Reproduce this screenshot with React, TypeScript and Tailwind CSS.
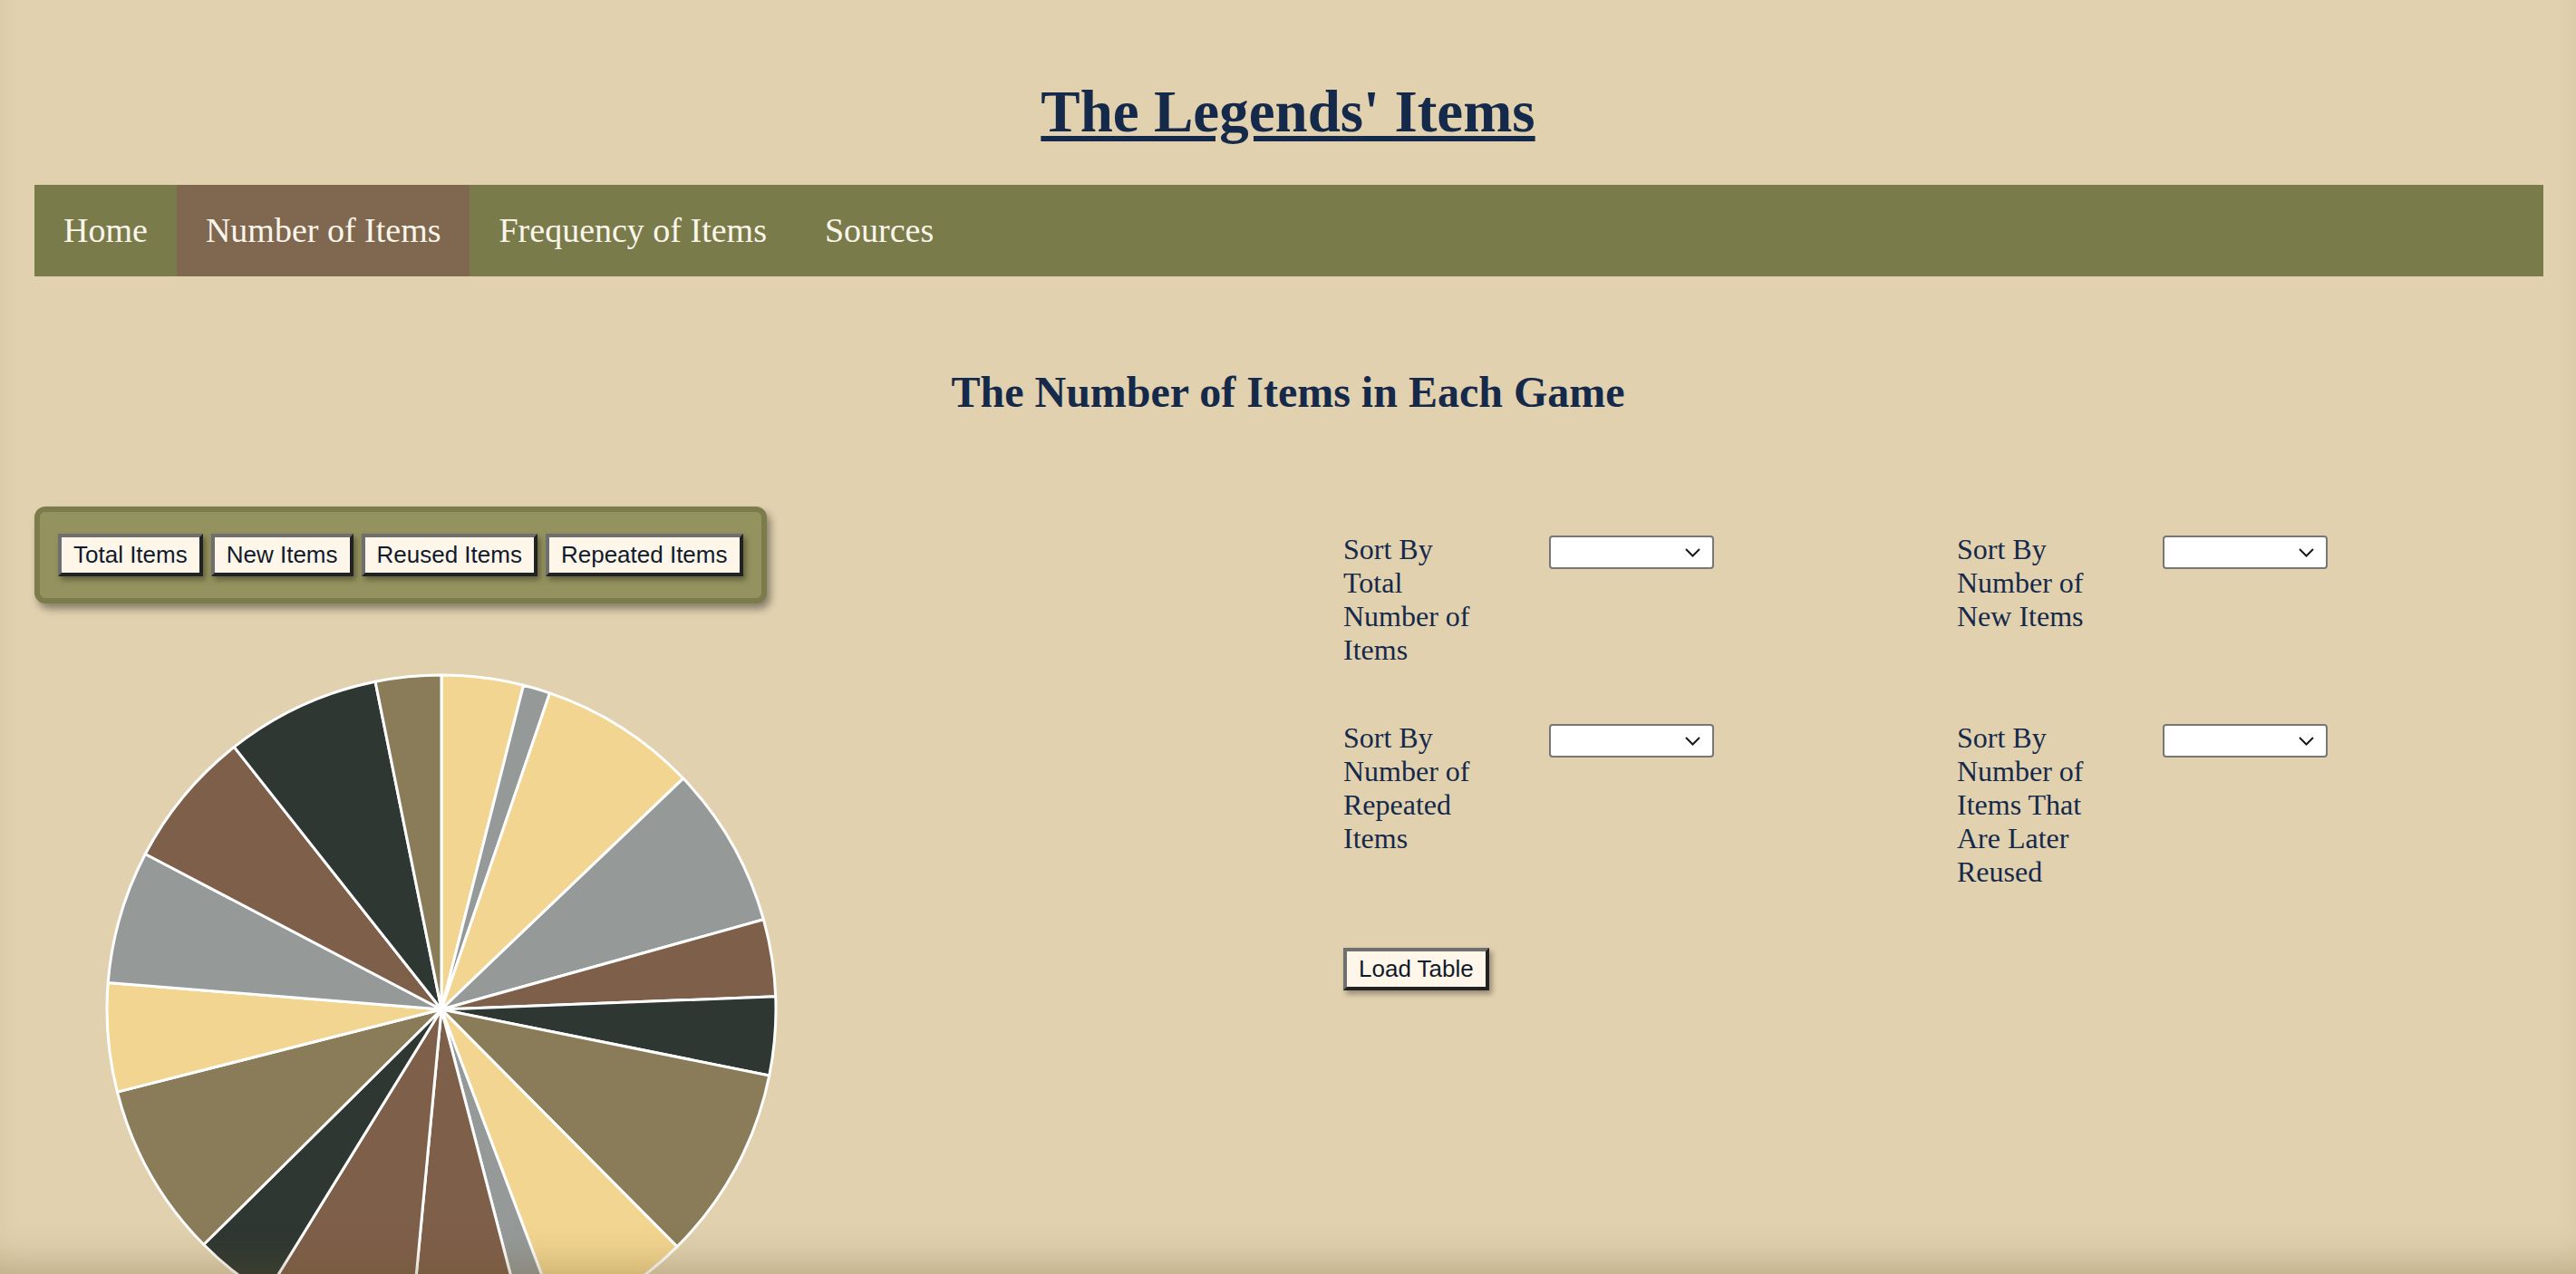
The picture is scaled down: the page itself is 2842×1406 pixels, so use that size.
import React from 'react';

const slices: [number, number, string][] = [
  [0, 14.2, '#F2D590'],
  [14.2, 18.9, '#959998'],
  [18.9, 46.3, '#F2D590'],
  [46.3, 74.4, '#959998'],
  [74.4, 87.8, '#7E5F4A'],
  [87.8, 101.4, '#2E3732'],
  [101.4, 135.2, '#8A7C59'],
  [135.2, 159.3, '#F2D590'],
  [159.3, 165.4, '#959998'],
  [165.4, 185.4, '#7E5F4A'],
  [185.4, 211.6, '#7E5F4A'],
  [211.6, 225.3, '#2E3732'],
  [225.3, 255.7, '#8A7C59'],
  [255.7, 274.6, '#F2D590'],
  [274.6, 297.7, '#959998'],
  [297.7, 321.7, '#7E5F4A'],
  [321.7, 348.6, '#2E3732'],
  [348.6, 360, '#8A7C59'],
];

function PieChart() {
  const c = 372;
  const r = 369;
  const pt = (deg: number) => {
    const a = (deg * Math.PI) / 180;
    return `${c + r * Math.sin(a)} ${c - r * Math.cos(a)}`;
  };
  return (
    <svg width="744" height="744" viewBox="0 0 744 744">
      {slices.map(([a0, a1, fill], i) => (
        <path
          key={i}
          d={`M ${c} ${c} L ${pt(a0)} A ${r} ${r} 0 ${a1 - a0 > 180 ? 1 : 0} 1 ${pt(a1)} Z`}
          fill={fill}
          stroke="#ffffff"
          strokeWidth="3"
          strokeLinejoin="round"
        />
      ))}
    </svg>
  );
}

function Bevel({ children }: { children: React.ReactNode }) {
  return (
    <button className="bg-[#FFF6EA] text-[#0f1a2a] font-['Liberation_Sans',Arial,sans-serif] text-[26px] leading-[31px] px-[13px] py-[4px] border-4 border-t-[#6f6f6f] border-l-[#6f6f6f] border-b-[#222222] border-r-[#222222] shadow-[3px_4px_6px_rgba(0,0,0,0.35)]">
      {children}
    </button>
  );
}

function SortField({ label }: { label: string }) {
  return (
    <div className="flex items-start">
      <div className="w-[227px] pr-[68px] text-[32px] leading-[37px] text-[#15294A]">{label}</div>
      <div className="relative mt-[3px]">
        <select className="appearance-none w-[182px] h-[37px] bg-white border-2 border-[#777777] rounded-[4px]">
          <option value=""></option>
        </select>
        <svg className="absolute right-[15px] top-[14px] pointer-events-none" width="17" height="10" viewBox="0 0 17 10">
          <path d="M1 1 L8.5 8.5 L16 1" fill="none" stroke="#1a1a1a" strokeWidth="2" />
        </svg>
      </div>
    </div>
  );
}

export default function App() {
  return (
    <div className="min-h-screen bg-[#E1D1AF] font-['Liberation_Serif','Times_New_Roman',serif] pt-[86px] pb-[40px]">
      <h1 className="text-center text-[65px] leading-[75px] font-bold text-[#15294A] underline decoration-[6px] underline-offset-[5px]">
        The Legends' Items
      </h1>

      <nav className="mt-[43px] ml-[38px] mr-[36px] h-[101px] bg-[#7A7B4B] flex">
        {['Home', 'Number of Items', 'Frequency of Items', 'Sources'].map((item) => (
          <a
            key={item}
            className={`flex items-center px-[32px] text-[38px] text-[#FBF6EA] ${item === 'Number of Items' ? 'bg-[#7F6750]' : ''}`}
          >
            {item}
          </a>
        ))}
      </nav>

      <h2 className="mt-[100px] text-center text-[48px] leading-[55px] font-bold text-[#15294A]">
        The Number of Items in Each Game
      </h2>

      <div className="mt-[99px] flex">
        {/* chart side */}
        <div className="ml-[38px] w-[1444px] shrink-0">
          <div className="inline-flex gap-[9px] px-[20px] py-[24px] bg-[#94935F] border-[6px] border-[#7C7B4B] rounded-[12px] shadow-[4px_6px_8px_rgba(0,0,0,0.4)]">
            <Bevel>Total Items</Bevel>
            <Bevel>New Items</Bevel>
            <Bevel>Reused Items</Bevel>
            <Bevel>Repeated Items</Bevel>
          </div>
          <div className="mt-[76px] ml-[77px]">
            <PieChart />
          </div>
        </div>

        {/* sort form */}
        <div className="mt-[29px]">
          <div className="grid grid-cols-[409px_409px] gap-x-[268px] gap-y-[60px]">
            <SortField label="Sort By Total Number of Items" />
            <SortField label="Sort By Number of New Items" />
            <SortField label="Sort By Number of Repeated Items" />
            <SortField label="Sort By Number of Items That Are Later Reused" />
          </div>
          <div className="mt-[65px]">
            <Bevel>Load Table</Bevel>
          </div>
        </div>
      </div>

      <div className="fixed inset-0 pointer-events-none shadow-[inset_0_-36px_40px_-24px_rgba(110,85,40,0.3)]"></div>
    </div>
  );
}
